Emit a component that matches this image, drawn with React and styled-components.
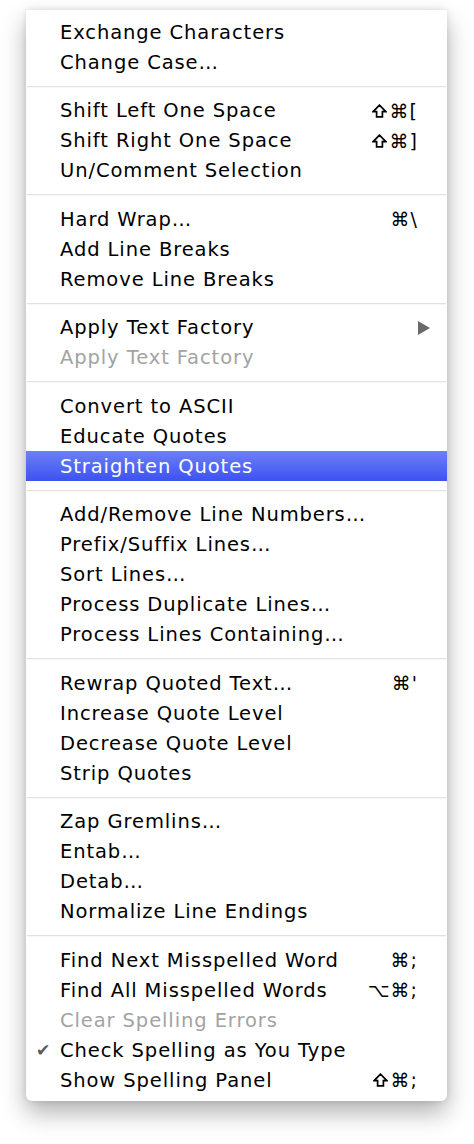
import React from 'react'
import styled, { createGlobalStyle } from 'styled-components'

const GlobalStyle = createGlobalStyle`
  html, body {
    margin: 0;
    padding: 0;
    background: #ffffff;
  }
`

const Page = styled.div`
  width: 474px;
  height: 1144px;
  padding: 10px 0 0 26px;
  box-sizing: border-box;
`

const Menu = styled.div`
  width: 421px;
  padding: 7px 0 6px 0;
  background: #ffffff;
  border-radius: 2px 2px 6px 6px;
  box-shadow: 0 12px 24px rgba(0, 0, 0, 0.3), 0 0 6px rgba(0, 0, 0, 0.12);
  font-family: "DejaVu Sans", "Lucida Grande", sans-serif;
  font-size: 19.5px;
  letter-spacing: 0.9px;
  color: #000000;
`

const Row = styled.div`
  height: 30px;
  display: flex;
  align-items: center;
  padding: 0 29px 0 34px;
  position: relative;
  color: ${(p) => (p.$disabled ? '#a3a3a3' : p.$active ? '#ffffff' : '#000000')};
  background: ${(p) => (p.$active ? 'linear-gradient(#6c80f6, #3d52f0)' : 'transparent')};
`

const Label = styled.span`
  flex: 1;
  white-space: nowrap;
`

const Shortcut = styled.span`
  display: flex;
  align-items: center;
  white-space: nowrap;
  letter-spacing: 1px;
  font-size: 19px;
`

const Check = styled.span`
  position: absolute;
  left: 10px;
  top: 0;
  line-height: 30px;
  color: #5a5a5a;
  font-size: 17px;
`

const Separator = styled.div`
  height: 18.5px;
  display: flex;
  align-items: center;
  &::after {
    content: '';
    flex: 1;
    margin: 0 1px;
    height: 1px;
    background: #e2e2e2;
    box-shadow: 0 1px 0 #f7f7f7;
  }
`

const ArrowWrap = styled.span`
  display: flex;
  margin-right: -12px;
`

const ShiftWrap = styled.span`
  display: inline-flex;
  margin-right: 3px;
`

const Arrow = () => (
  <ArrowWrap>
    <svg width="12" height="14" viewBox="0 0 12 14">
      <polygon points="0,0 12,7 0,14" fill="#6a6a6a" />
    </svg>
  </ArrowWrap>
)

const Shift = () => (
  <ShiftWrap>
    <svg width="15" height="14" viewBox="0 0 15 14">
      <path
        d="M7.5 1.2 L1.2 7.6 H4.6 V12.8 H10.4 V7.6 H13.8 Z"
        fill="none"
        stroke="#000"
        strokeWidth="1.7"
        strokeLinejoin="miter"
      />
    </svg>
  </ShiftWrap>
)

const renderKey = (key) => {
  if (key.startsWith('⇧')) {
    return (
      <>
        <Shift />
        {key.slice(1)}
      </>
    )
  }
  return key
}

const sections = [
  [
    { label: 'Exchange Characters' },
    { label: 'Change Case…' },
  ],
  [
    { label: 'Shift Left One Space', key: '⇧⌘[' },
    { label: 'Shift Right One Space', key: '⇧⌘]' },
    { label: 'Un/Comment Selection' },
  ],
  [
    { label: 'Hard Wrap…', key: '⌘\\' },
    { label: 'Add Line Breaks' },
    { label: 'Remove Line Breaks' },
  ],
  [
    { label: 'Apply Text Factory', submenu: true },
    { label: 'Apply Text Factory', disabled: true },
  ],
  [
    { label: 'Convert to ASCII' },
    { label: 'Educate Quotes' },
    { label: 'Straighten Quotes', active: true },
  ],
  [
    { label: 'Add/Remove Line Numbers…' },
    { label: 'Prefix/Suffix Lines…' },
    { label: 'Sort Lines…' },
    { label: 'Process Duplicate Lines…' },
    { label: 'Process Lines Containing…' },
  ],
  [
    { label: 'Rewrap Quoted Text…', key: "⌘'" },
    { label: 'Increase Quote Level' },
    { label: 'Decrease Quote Level' },
    { label: 'Strip Quotes' },
  ],
  [
    { label: 'Zap Gremlins…' },
    { label: 'Entab…' },
    { label: 'Detab…' },
    { label: 'Normalize Line Endings' },
  ],
  [
    { label: 'Find Next Misspelled Word', key: '⌘;' },
    { label: 'Find All Misspelled Words', key: '⌥⌘;' },
    { label: 'Clear Spelling Errors', disabled: true },
    { label: 'Check Spelling as You Type', checked: true },
    { label: 'Show Spelling Panel', key: '⇧⌘;' },
  ],
]

const App = () => {
  return (
    <Page>
      <GlobalStyle />
      <Menu>
        {sections.map((items, si) => (
          <React.Fragment key={si}>
            {si > 0 && <Separator />}
            {items.map((item, i) => (
              <Row key={i} $disabled={item.disabled} $active={item.active}>
                {item.checked && <Check>✔</Check>}
                <Label>{item.label}</Label>
                {item.key && <Shortcut>{renderKey(item.key)}</Shortcut>}
                {item.submenu && <Arrow />}
              </Row>
            ))}
          </React.Fragment>
        ))}
      </Menu>
    </Page>
  )
}

export default App
